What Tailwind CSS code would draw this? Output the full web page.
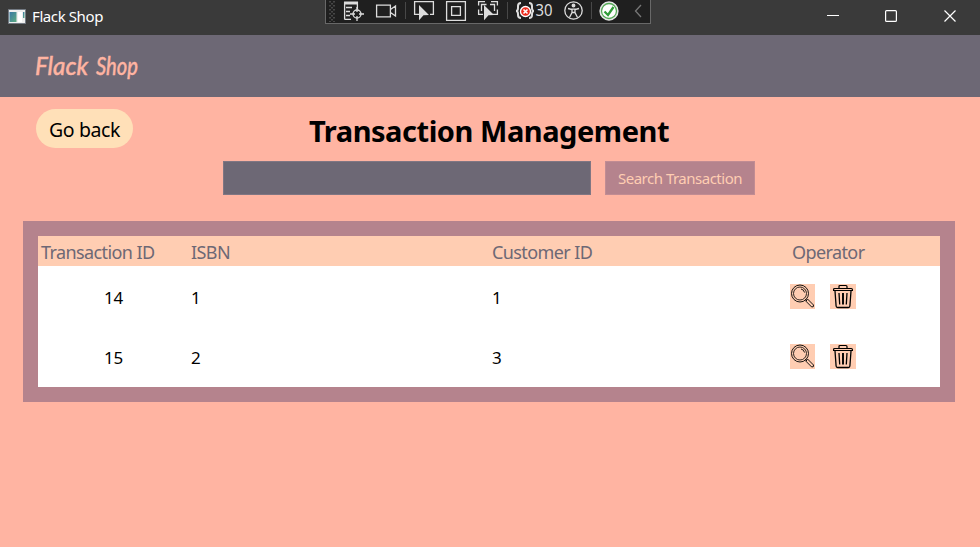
<!DOCTYPE html>
<html lang="en">
<head>
<meta charset="utf-8">
<title>Flack Shop</title>
<script src="https://cdn.jsdelivr.net/npm/@tailwindcss/browser@4"></script>
</head>
<body class="w-[980px] h-[547px] overflow-hidden bg-[#ffb4a2] font-['Noto_Sans',sans-serif] text-black">
<svg class="hidden">
  <symbol id="search" viewBox="0 0 25 25"><g fill="none" stroke="#000"><circle cx="10" cy="9.500" r="8.500" stroke-width=".9"/><circle cx="10" cy="9.500" r="6.500" stroke-width=".8"/><path d="M11 5q3 .5 3.500 3.500M15.500 15.500l1.500 1.500M17.500 15l6 6q.6 2.300-1.800 2l-6-6z" stroke-width=".9"/></g></symbol>
  <symbol id="trash" viewBox="0 0 26 25"><g fill="none" stroke="#000"><path d="M9 4V2.500Q9 1.500 10 1.500h6q1 0 1 1V4" stroke-width="1.200"/><path d="M3.600 6.500V5.600q0-1.100 1.100-1.100h16.600q1.100 0 1.100 1.100v.9z" stroke-width="1.200"/><path d="M5 7l1.100 15q.1 1.500 1.500 1.500h10.800q1.400 0 1.500-1.500L21 7" stroke-width="1.300"/><path d="M9 9l.7 11.500M17 9l-.7 11.500" stroke-width="1.300"/><path d="M13 9v11.500" stroke-width="1.900"/></g></symbol>
</svg>
<div class="relative h-[35px] bg-[#3a3a3a] flex items-center justify-between">
  <div class="flex items-center pl-2 pb-[3px]">
    <svg class="w-[18px] h-[15px]" viewBox="0 0 18 15"><defs><linearGradient id="app" x2="1" y2="1"><stop stop-color="#3978a5"/><stop offset="1" stop-color="#5dab80"/></linearGradient></defs><path fill="#eee" stroke="#737a83" d="M.5.5h17v14H.5z"/><path fill="url(#app)" d="M1.500 3h7v10h-7z"/><path fill="#fff" d="M10 3h4v10h-4z"/><path fill="url(#app)" d="M15 3h1.500v6H15z"/></svg>
    <span class="ml-[6px] text-[15px] leading-5 tracking-[-0.4px] text-white whitespace-nowrap">Flack Shop</span>
  </div>
  <svg class="w-[180px] h-[35px]" viewBox="0 0 180 35" fill="none" stroke="#fff" stroke-width="1.200"><path d="M27 15.500h12M144.500 10.500l11 11M155.500 10.500l-11 11"/><rect x="85.600" y="10.600" width="10.800" height="10.800" rx="1"/></svg>
  <div class="absolute left-[325px] top-0 w-[326px] h-6 bg-[#1f1f1f] border border-t-0 border-[#686868]">
    <svg class="w-[324px] h-[23px]" viewBox="326 0 324 23" fill="none" stroke="#ddd" stroke-width="1.300">
      <path stroke="#555" stroke-width="1.500" stroke-dasharray="1.500 2.500" d="M330 1v21M334 1v21"/><path stroke="#555" stroke-width="1.500" stroke-dasharray="1.500 2.500" d="M332 3v19"/>
      <path d="M344.600 19.400V2.600h12.800V9M344.600 19.400h6.400M346 7.500h6M346 11.500h4M346 15.500h4"/><path d="M344 3h14" stroke-width="3"/><circle cx="357" cy="14" r="4"/><path d="M357 7v5M357 16v5M350 14h5M359 14h5"/>
      <path d="M376.600 5.100h13.800v11.800h-13.800zM390.500 9.500l5-3.500v10l-5-3.500"/>
      <path stroke="#484848" stroke-width="1" d="M405.500 2v17M507.500 2v17M591.500 2v17"/>
      <path d="M419 14.400h-4.400V1.600h18.800v12.800H430"/><path fill="#ddd" stroke="none" d="M419 5l10 10-5.500.2-4.500 5z"/>
      <path d="M446.600 1.600h18.800v18.800h-18.800zM451.600 6.600h8.800v8.800h-8.800z"/>
      <path d="M485 1.600h-6.400v3.800M478.600 9.600v4.800h4.400M492 14.400h5.400v-4.800M497.400 5.400V1.600H491M481.500 11V4.500h5M490 4.500h4.500V11"/><path fill="#ddd" stroke="none" d="M484 5l10 10-5.500.2-4.500 5z"/>
      <path stroke-width="2" d="M521 3q-3 0-3 3v2q0 3-2 3 2 0 2 3v1q0 3 3 3M529 3q3 0 3 3v2q0 3 2 3-2 0-2 3v1q0 3-3 3"/><circle cx="525.500" cy="11.500" r="5" fill="#ed2b1c" stroke="#fff"/><path stroke="#fff" stroke-width="1.600" d="M523.500 9.500l4 4M527.500 9.500l-4 4"/>
      <text x="535.500" y="16" textLength="17" lengthAdjust="spacingAndGlyphs" fill="#ddd" stroke="none" font-size="15.500">30</text>
      <circle cx="573.500" cy="10.500" r="8.700"/><circle cx="573.500" cy="5.500" r="1.300" fill="#ddd"/><path d="M568 8.500l4 1v3l-2.500 5M579 8.500l-4 1v3l2.500 5M572 12.500h3M570 9.200h7"/>
      <circle cx="609" cy="11" r="9" fill="#fff" stroke="#e6e6e6"/><circle cx="609" cy="11" r="7.500" stroke="#55a957"/><path stroke="#2f9b38" stroke-width="2.300" d="M604.500 11.500l3.500 3.500 5.500-8"/>
      <path stroke="#777" d="M641 5l-5.500 6 5.500 6"/>
    </svg>
  </div>
</div>
<header class="h-[62px] bg-[#6d6875] pl-[34px]">
  <svg class="w-[140px] h-[62px] text-[#ffb4a2]" viewBox="0 0 140 62" font-family="'Lato',cursive" font-style="italic" font-weight="500" font-size="25" fill="currentColor" stroke="currentColor" stroke-width=".4"><text x="1" y="40" textLength="53" lengthAdjust="spacingAndGlyphs">Flack</text><text x="62" y="40" textLength="42" lengthAdjust="spacingAndGlyphs">Shop</text></svg>
</header>
<main>
  <div class="h-16 pt-3 pl-9 pr-[38px] grid grid-cols-[97px_1fr_97px] items-start">
    <button class="w-[97px] h-[39px] rounded-[20px] bg-[#ffe0b8] text-[19.500px] leading-[42px] tracking-[-0.4px] whitespace-nowrap">Go back</button>
    <h1 class="text-center text-[29px] leading-[44px] font-bold tracking-[-0.460px] whitespace-nowrap">Transaction Management</h1>
  </div>
  <div class="flex gap-[14px] pl-[223px]">
    <input aria-label="Search" class="w-[368px] h-[34px] bg-[#6d6875] border border-[#807683]">
    <button class="w-[150px] h-[34px] bg-[#b5838d] border border-[#c18c93] text-[#ffcdb2] text-[15px] leading-8 tracking-[-0.5px] whitespace-nowrap">Search Transaction</button>
  </div>
  <section class="mt-[26px] ml-[23px] w-[932px] h-[181px] border-[15px] border-[#b5838d] bg-white">
    <div class="grid grid-cols-[150px_301px_300px_151px] h-[30px] bg-[#ffcdb2] pl-[3px] text-[18px] leading-[32px] tracking-[-0.6px] text-[#6d6875] whitespace-nowrap">
      <span>Transaction ID</span><span>ISBN</span><span>Customer ID</span><span>Operator</span>
    </div>
    <div class="grid grid-cols-[150px_301px_298px_150px] h-[60px] pl-[3px] text-[17px] leading-[64px] tracking-[-0.3px]">
      <span class="pl-[63px]">14</span><span>1</span><span>1</span>
      <span class="flex gap-[15px] pt-[18px]"><svg class="w-[25px] h-[25px] bg-[#ffcdb2]"><use href="#search"/></svg><svg class="w-[26px] h-[25px] bg-[#ffcdb2]"><use href="#trash"/></svg></span>
    </div>
    <div class="grid grid-cols-[150px_301px_298px_150px] h-[60px] pl-[3px] text-[17px] leading-[64px] tracking-[-0.3px]">
      <span class="pl-[63px]">15</span><span>2</span><span>3</span>
      <span class="flex gap-[15px] pt-[18px]"><svg class="w-[25px] h-[25px] bg-[#ffcdb2]"><use href="#search"/></svg><svg class="w-[26px] h-[25px] bg-[#ffcdb2]"><use href="#trash"/></svg></span>
    </div>
  </section>
</main>
</body>
</html>
